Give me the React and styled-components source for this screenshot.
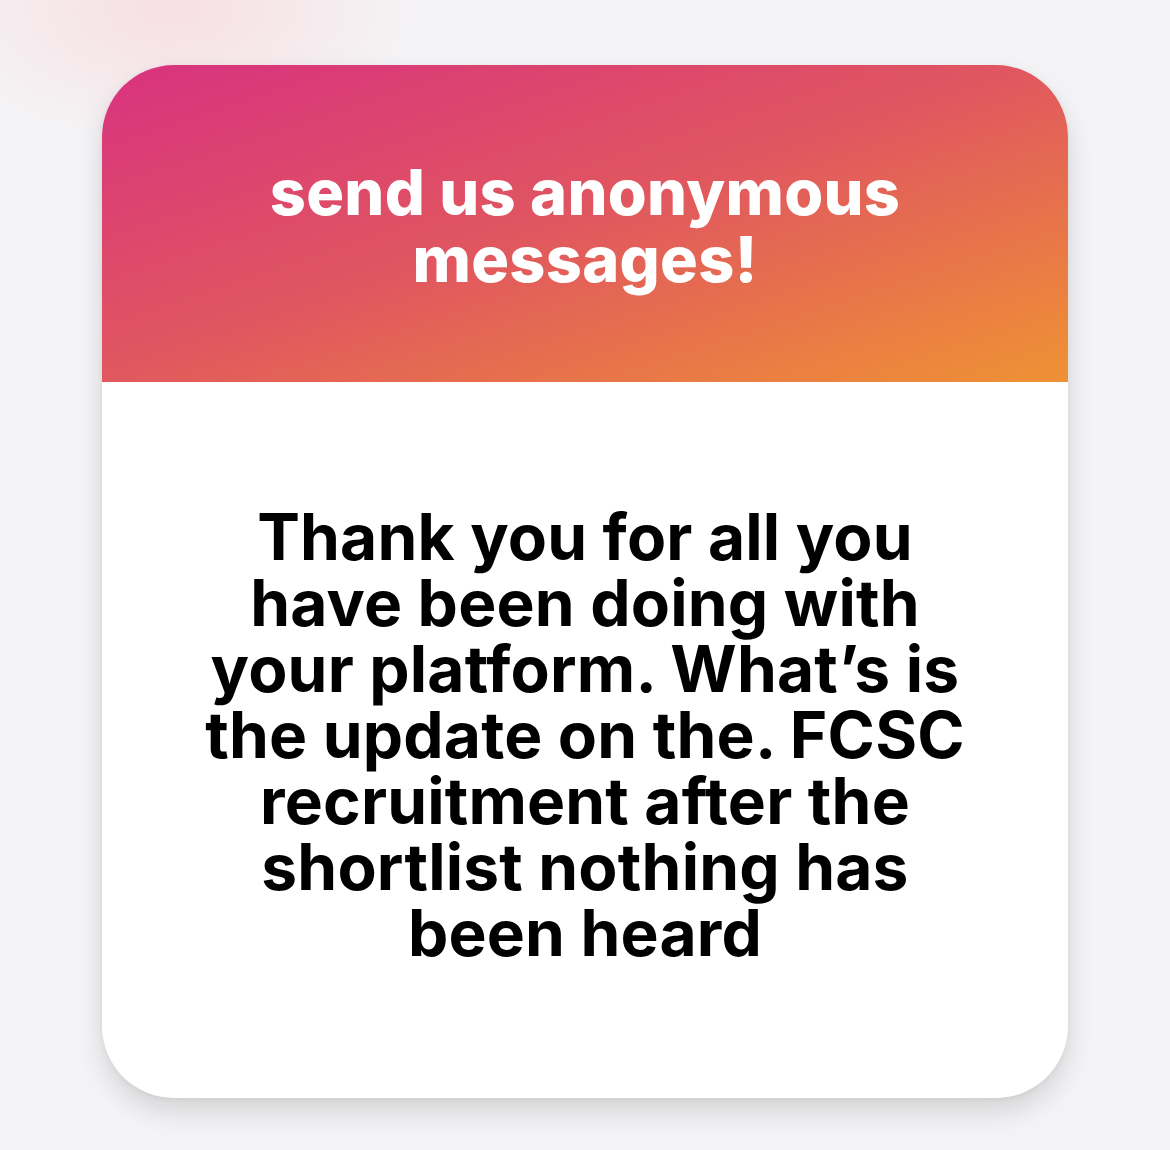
import React from 'react';
import styled, { createGlobalStyle } from 'styled-components';

const GlobalStyle = createGlobalStyle`
    html, body {
        margin: 0;
        padding: 0;
    }
    body {
        background: #f4f4f6;
        font-family: "Inter", "Liberation Sans", sans-serif;
    }
`;

export default function App() {
    return (
        <>
            <GlobalStyle />
            <Page>
                <Card>
                    <Header>
                        <Title>send us anonymous<br />messages!</Title>
                    </Header>
                    <Body>
                        <Message>
                            Thank you for all you<br />
                            have been doing with<br />
                            your platform. What’s is<br />
                            the update on the. FCSC<br />
                            recruitment after the<br />
                            shortlist nothing has<br />
                            been heard
                        </Message>
                    </Body>
                </Card>
            </Page>
        </>
    )
}

const Page = styled.div`
    width: 1170px;
    height: 1150px;
    box-sizing: border-box;
    padding: 65px 102px 0;
    background:
        radial-gradient(ellipse 260px 140px at 170px 10px, rgba(250, 205, 210, 0.55), rgba(250, 205, 210, 0) 100%),
        #f4f4f6;
`;

const Card = styled.div`
    width: 966px;
    height: 1033px;
    border-radius: 72px;
    overflow: hidden;
    background: #fff;
    display: flex;
    flex-direction: column;
    box-shadow: 0 14px 28px rgba(0, 0, 0, 0.13), 0 2px 6px rgba(0, 0, 0, 0.05);
`;

const Header = styled.div`
    height: 317px;
    flex-shrink: 0;
    display: flex;
    justify-content: center;
    padding-top: 94px;
    box-sizing: border-box;
    background: linear-gradient(to bottom right, #d8327f 0%, #e05660 48%, #ef9234 100%);
`;

const Title = styled.h1`
    margin: 0;
    color: #fff;
    text-align: center;
    font-family: "Inter", "Liberation Sans", sans-serif;
    font-weight: 800;
    font-size: 63px;
    line-height: 67px;
    letter-spacing: 0.3px;
`;

const Body = styled.div`
    flex: 1;
    display: flex;
    align-items: center;
    justify-content: center;
    padding-bottom: 10px;
`;

const Message = styled.p`
    margin: 0;
    color: #000;
    text-align: center;
    font-family: "Inter", "Liberation Sans", sans-serif;
    font-weight: 700;
    font-size: 64px;
    line-height: 66px;
    letter-spacing: 0.2px;
`;
